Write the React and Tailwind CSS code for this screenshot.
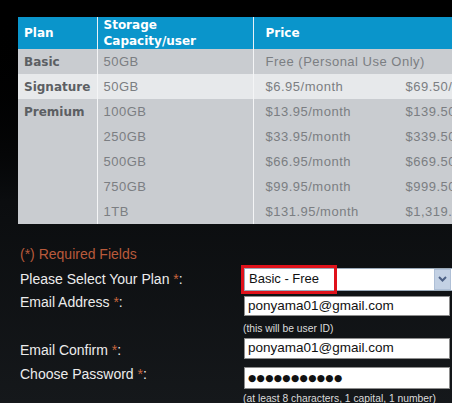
import React from 'react';

// Tabella piani + inizio del modulo di registrazione
const plans = [
    { plan: 'Basic', storage: '50GB', month: 'Free (Personal Use Only)', year: '', light: false },
    { plan: 'Signature', storage: '50GB', month: '$6.95/month', year: '$69.50/year', light: true },
    { plan: 'Premium', storage: '100GB', month: '$13.95/month', year: '$139.50/year', light: false },
    { plan: '', storage: '250GB', month: '$33.95/month', year: '$339.50/year', light: false },
    { plan: '', storage: '500GB', month: '$66.95/month', year: '$669.50/year', light: false },
    { plan: '', storage: '750GB', month: '$99.95/month', year: '$999.50/year', light: false },
    { plan: '', storage: '1TB', month: '$131.95/month', year: '$1,319.50/year', light: false },
];

const Star = () => <span className="text-[#c8643c]">*</span>;

const App = () => {
    return (
        <div className="w-[452px] h-[403px] overflow-hidden bg-gradient-to-b from-[#000000] via-[#0b0d0f] to-[#15181b] font-['Liberation_Sans',Arial,sans-serif]">
            <div className="pt-[17px] pl-[18px]">
                <table className="border-collapse w-[560px] table-fixed">
                    <colgroup>
                        <col className="w-[79px]" />
                        <col className="w-[156px]" />
                        <col />
                    </colgroup>
                    <thead>
                        <tr className="h-[32px] bg-[#0a95cb] text-white font-['DejaVu_Sans',Verdana,sans-serif] font-bold text-[12px] leading-[16px] text-left">
                            <th className="pl-[6px] font-bold">Plan</th>
                            <th className="pl-[6px] border-l border-[#e8f2f7] font-bold">Storage<br />Capacity/user</th>
                            <th className="pl-[12px] border-l border-[#e8f2f7] font-bold">Price</th>
                        </tr>
                    </thead>
                    <tbody>
                        {plans.map((p) => (
                            <tr key={p.storage + p.month} className={`h-[25px] ${p.light ? 'bg-[#e7e9eb]' : 'bg-[#c9ccd0]'}`}>
                                <td className="pl-[6px] font-['DejaVu_Sans',Verdana,sans-serif] font-bold text-[12px] text-[#5c5f63]">{p.plan}</td>
                                <td className="pl-[6px] border-l border-[#f4f5f6] text-[13px] tracking-[0.5px] text-[#7b7e82]">{p.storage}</td>
                                <td className="pl-[12px] border-l border-[#f4f5f6] text-[13px] tracking-[0.5px] text-[#7b7e82] whitespace-nowrap">
                                    <span className="inline-block w-[140px]">{p.month}</span>
                                    <span>{p.year}</span>
                                </td>
                            </tr>
                        ))}
                    </tbody>
                </table>
            </div>

            <div className="mt-[22px] pl-[20px] text-[14px] text-[#ececec]">
                <div className="h-[16px] leading-[16px] text-[#b95a3b]">(*) Required Fields</div>

                <div className="mt-[4px] flex items-center h-[26px]">
                    <div className="w-[224px] shrink-0 leading-[16px]">Please Select Your Plan <Star />:</div>
                    <div className="relative shrink-0">
                        <div className="w-[220px] h-[23px] bg-white border border-[#9aa9b8] flex items-center">
                            <span className="pl-[4px] text-[13px] text-[#111] flex-1">Basic - Free</span>
                            <span className="w-[17px] h-[21px] mr-[12px] bg-[#c3d1e4] border border-[#aebfd6] flex items-center justify-center">
                                <svg width="9" height="6" viewBox="0 0 9 6"><path d="M1 1 L4.5 4.5 L8 1" stroke="#4d6185" strokeWidth="2" fill="none" /></svg>
                            </span>
                        </div>
                        <div className="absolute left-[-3px] top-[-3px] w-[96px] h-[29px] border-[3px] border-[#e0121b]"></div>
                    </div>
                </div>

                <div className="mt-[2px] flex items-start h-[22px]">
                    <div className="w-[224px] shrink-0 leading-[16px]">Email Address <Star />:</div>
                    <div className="mt-[2px] shrink-0 w-[206px] h-[20px] bg-white border border-[#8d8d8d] flex items-center pl-[3px] text-[13.5px] text-[#111]">ponyama01@gmail.com</div>
                </div>

                <div className="mt-[7px] pl-[223px] text-[10.3px] leading-[12px] text-[#dcdcdc]">(this will be user ID)</div>

                <div className="mt-[3px] flex items-center h-[21px]">
                    <div className="w-[224px] shrink-0 leading-[16px] mt-[2px]">Email Confirm <Star />:</div>
                    <div className="shrink-0 w-[206px] h-[21px] bg-white border border-[#8d8d8d] flex items-center pl-[3px] text-[13.5px] text-[#111]">ponyama01@gmail.com</div>
                </div>

                <div className="mt-[7px] flex items-start h-[23px]">
                    <div className="w-[224px] shrink-0 leading-[16px]">Choose Password <Star />:</div>
                    <div className="mt-[1px] shrink-0 w-[206px] h-[22px] bg-white border border-[#8d8d8d] flex items-center pl-[3px] text-[9.5px] tracking-[0.3px] text-[#111] font-['DejaVu_Sans',sans-serif]">●●●●●●●●●●●</div>
                </div>

                <div className="mt-[4px] pl-[223px] text-[10.3px] leading-[12px] text-[#dcdcdc] whitespace-nowrap">(at least 8 characters, 1 capital, 1 number)</div>
            </div>
        </div>
    );
};

export default App;
